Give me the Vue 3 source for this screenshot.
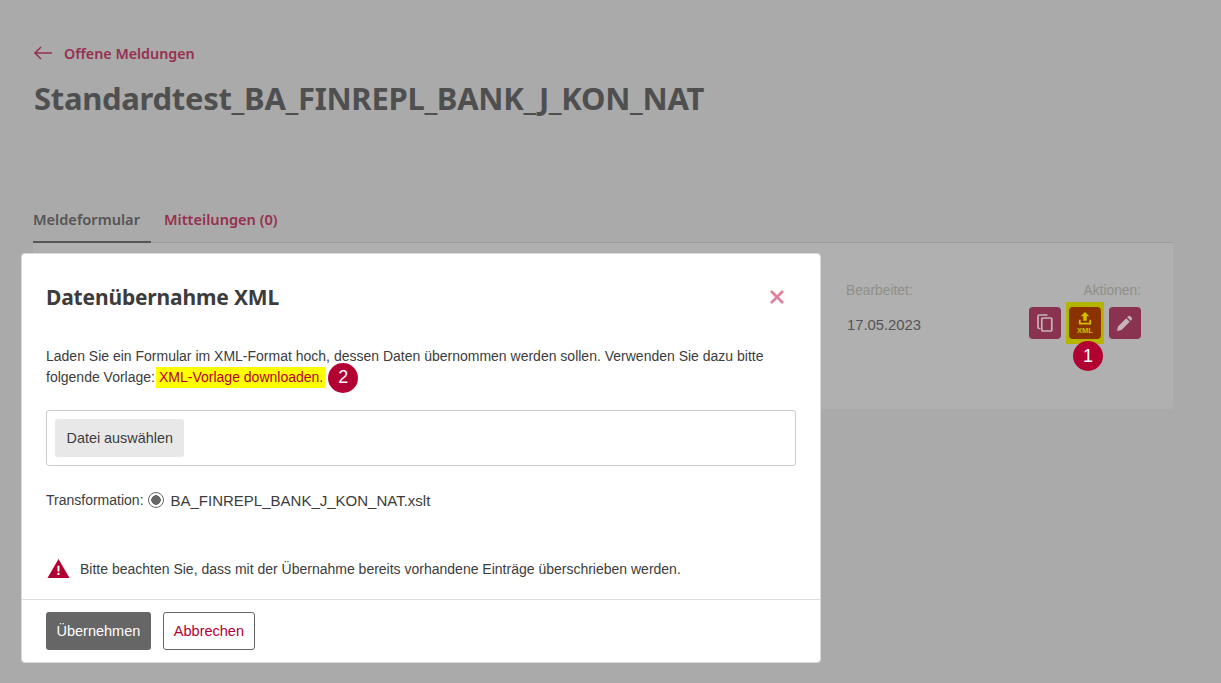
<template>
  <div class="page">
    <a class="back">
      <svg width="20" height="14" viewBox="0 0 20 14" fill="none" stroke="#96304f" stroke-width="1.6">
        <path d="M19 7H2M8 1L2 7l6 6" />
      </svg>
      <span>Offene Meldungen</span>
    </a>
    <h1 class="title">Standardtest_BA_FINREPL_BANK_J_KON_NAT</h1>

    <div class="tabs">
      <div class="tab active">Meldeformular</div>
      <div class="tab">Mitteilungen (0)</div>
    </div>

    <div class="panel">
      <div class="col">
        <div class="label">Bearbeitet:</div>
        <div class="date">17.05.2023</div>
      </div>
      <div class="col col-actions">
        <div class="label">Aktionen:</div>
        <div class="actions">
          <button class="action">
            <svg width="20" height="20" viewBox="0 0 20 20" fill="none" stroke="#c4b4ba" stroke-width="1.7">
              <path d="M5.5 15.5H4.2a1.2 1.2 0 0 1-1.200-1.200V3.200A1.200 1.200 0 0 1 4.200 2h8.300" />
              <rect x="6.800" y="5" width="10" height="13" rx="1" />
            </svg>
          </button>
          <div class="mark">
            <button class="action action-xml">
              <svg width="14" height="13" viewBox="0 0 16 15" fill="#cfc000">
                <path d="M8 0l5 5H10v5H6V5H3zM1 9h2v3.500h10V9h2v5.500H1z" />
              </svg>
              <span class="xml">XML</span>
            </button>
            <span class="badge badge-one">1</span>
          </div>
          <button class="action">
            <svg width="18" height="18" viewBox="0 0 18 18" fill="#c4b4ba">
              <path d="M1 17l1-4.500L10.200 4.300l3.500 3.500L5.500 16zM11.200 3.300l1-1a1.500 1.500 0 0 1 2.100 0l1.400 1.400a1.500 1.500 0 0 1 0 2.100l-1 1z" />
            </svg>
          </button>
        </div>
      </div>
    </div>

    <div class="modal">
      <div class="modal-head">
        <h2>Datenübernahme XML</h2>
        <svg class="close" width="16" height="16" viewBox="0 0 16 16" stroke="#e07f9c" stroke-width="2.600">
          <path d="M2 2l12 12M14 2L2 14" />
        </svg>
      </div>

      <div class="modal-body">
        <div class="intro">
          <div>Laden Sie ein Formular im XML-Format hoch, dessen Daten übernommen werden sollen. Verwenden Sie dazu bitte</div>
          <div class="intro-line">
            <span>folgende Vorlage:</span>
            <span class="hl">XML-Vorlage downloaden.</span>
            <span class="badge badge-two">2</span>
          </div>
        </div>

        <div class="file-box">
          <button class="file-btn">Datei auswählen</button>
        </div>

        <div class="transform">
          <span>Transformation:</span>
          <span class="radio"></span>
          <span class="xslt">BA_FINREPL_BANK_J_KON_NAT.xslt</span>
        </div>

        <div class="warning">
          <svg width="23" height="21" viewBox="0 0 24 21">
            <path d="M12 0.500L23.500 20.500H0.500z" fill="#b30033" />
            <path d="M11 7.500h2v6h-2zM11 15h2v2.200h-2z" fill="#fff" />
          </svg>
          <span>Bitte beachten Sie, dass mit der Übernahme bereits vorhandene Einträge überschrieben werden.</span>
        </div>
      </div>

      <div class="modal-foot">
        <button class="btn btn-primary">Übernehmen</button>
        <button class="btn btn-outline">Abbrechen</button>
      </div>
    </div>
  </div>
</template>

<script setup>
</script>

<style>
html,
body {
  margin: 0;
  background: #aaaaaa;
}
</style>

<style scoped>
.page {
  position: relative;
  height: 683px;
  overflow: hidden;
  box-sizing: border-box;
  padding: 43px 48px 0 33px;
  background: #aaaaaa;
  font-family: "Liberation Sans", Arial, sans-serif;
  font-size: 14px;
  color: #3c3c3c;
}

.back {
  display: flex;
  align-items: center;
  gap: 11px;
  height: 20px;
  font-family: "Noto Sans", sans-serif;
  font-weight: 600;
  font-size: 14.300px;
  color: #96304f;
}

.title {
  margin: 14px 0 0 1px;
  font-family: "Noto Sans", sans-serif;
  font-weight: 700;
  font-size: 31px;
  line-height: 42px;
  letter-spacing: -0.3px;
  color: #4f4f4f;
}

.tabs {
  display: flex;
  gap: 13px;
  margin-top: 81px;
  border-bottom: 1px solid #9c9c9c;
  height: 42px;
}

.tab {
  font-family: "Noto Sans", sans-serif;
  font-weight: 600;
  font-size: 14.600px;
  line-height: 20px;
  padding-top: 9px;
  color: #96304f;
}

.tab.active {
  color: #555555;
  padding-right: 11px;
  margin-bottom: -1px;
  border-bottom: 2px solid #555555;
  box-sizing: border-box;
  height: 43px;
}

.panel {
  display: flex;
  justify-content: flex-end;
  gap: 108px;
  height: 166px;
  box-sizing: border-box;
  padding: 40px 32px 0 0;
  background: #b0b0b0;
  border-radius: 0 0 3px 3px;
}

.col {
  display: flex;
  flex-direction: column;
}

.col-actions {
  align-items: flex-end;
}

.label {
  font-size: 13.800px;
  line-height: 16px;
  color: #8f8f86;
}

.date {
  margin: 16px 0 0 1px;
  font-size: 14.800px;
  line-height: 20px;
  color: #555555;
}

.actions {
  display: flex;
  gap: 8px;
  margin-top: 8px;
  align-items: flex-start;
}

.action {
  display: flex;
  flex-direction: column;
  align-items: center;
  justify-content: center;
  width: 32px;
  height: 32px;
  margin: 0;
  padding: 0;
  border: none;
  border-radius: 4px;
  background: #8a3350;
}

.mark {
  position: relative;
  padding: 5px 3px;
  margin: -5px -3px;
  background: #b5b500;
}

.action-xml {
  background: #8a3300;
}

.xml {
  font-size: 7.500px;
  line-height: 8px;
  font-weight: 700;
  color: #cfc000;
  margin-top: 2px;
}

.badge {
  display: inline-flex;
  align-items: center;
  justify-content: center;
  width: 30px;
  height: 30px;
  border-radius: 50%;
  background: #b30033;
  color: #ffffff;
  font-size: 18px;
}

.badge-one {
  position: absolute;
  left: 7px;
  top: 39px;
}

.badge-two {
  flex: none;
  margin-left: 3px;
}

.modal {
  position: absolute;
  left: 21px;
  top: 253px;
  width: 800px;
  height: 410px;
  display: flex;
  flex-direction: column;
  box-sizing: border-box;
  background: #ffffff;
  border: 1px solid #d9d9d9;
  border-radius: 4px;
}

.modal-head {
  display: flex;
  align-items: center;
  justify-content: space-between;
  padding: 27px 35px 0 24px;
  height: 32px;
}

.modal-head h2 {
  margin: 0;
  font-family: "Noto Sans", sans-serif;
  font-weight: 700;
  font-size: 21px;
  letter-spacing: -0.17px;
  color: #3c3c3c;
}

.modal-body {
  flex: 1;
  padding: 33px 24px 0;
}

.intro {
  line-height: 21px;
}

.intro-line {
  display: flex;
  align-items: center;
  height: 21px;
}

.hl {
  background: #ffff00;
  color: #b30033;
  padding: 0 2px 0 3px;
  margin-left: 1px;
}

.file-box {
  display: flex;
  align-items: center;
  height: 56px;
  box-sizing: border-box;
  margin-top: 22px;
  padding-left: 8px;
  border: 1px solid #cccccc;
  border-radius: 3px;
}

.file-btn {
  height: 38px;
  padding: 0 11.500px;
  border: none;
  border-radius: 3px;
  background: #e8e8e8;
  color: #3c3c3c;
  font: inherit;
  font-size: 14.400px;
}

.transform {
  display: flex;
  align-items: center;
  margin-top: 24px;
  height: 20px;
}

.radio {
  width: 14px;
  height: 14px;
  margin: 0 7px 0 4px;
  border: 1px solid #666666;
  border-radius: 50%;
  background: radial-gradient(circle, #666666 0 4.500px, #ffffff 5px);
}

.xslt {
  font-size: 15px;
}

.warning {
  display: flex;
  align-items: center;
  gap: 10px;
  margin-top: 48px;
  padding-left: 1px;
}

.modal-foot {
  display: flex;
  gap: 12px;
  height: 63px;
  box-sizing: border-box;
  padding: 12px 24px 0;
  border-top: 1px solid #dddddd;
}

.btn {
  height: 38px;
  box-sizing: border-box;
  margin: 0;
  padding: 0 10px;
  border-radius: 3px;
  font: inherit;
  font-size: 14.500px;
}

.btn-primary {
  border: none;
  padding: 0 10.500px;
  background: #666666;
  color: #ffffff;
}

.btn-outline {
  border: 1px solid #666666;
  background: #ffffff;
  color: #b30033;
}
</style>
